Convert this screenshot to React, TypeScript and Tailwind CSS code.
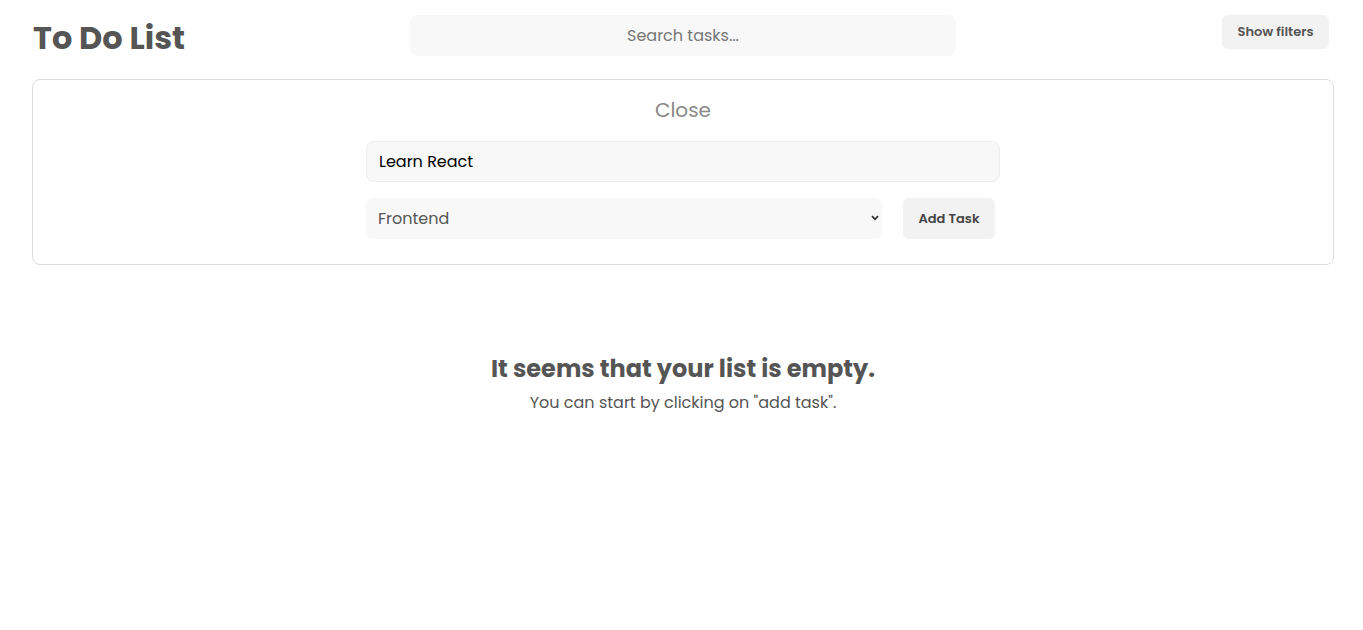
import { useState } from "react";

const font = { fontFamily: "Poppins, Inter, 'Open Sans', sans-serif" };

export default function App() {
    const [task, setTask] = useState("Learn React");
    const [category, setCategory] = useState("Frontend");

    return (
        <div className="min-h-screen bg-white text-[#555]" style={font}>
            {/* Header */}
            <div className="grid grid-cols-[1fr_546px_1fr] items-start pl-[33px] pr-[30px] pt-[15px]">
                <h1 className="text-[32px] font-bold leading-none mt-[7px] text-[#555]">To Do List</h1>
                <input
                    placeholder="Search tasks..."
                    className="h-[41px] rounded-lg bg-[#f8f8f8] text-center text-[16px] text-[#555] placeholder:text-[#777] outline-none"
                />
                <button className="justify-self-end mr-[4px] h-[34px] w-[107px] rounded-md bg-[#f2f2f2] text-[13px] font-semibold text-[#555]">
                    Show filters
                </button>
            </div>

            {/* Add task panel */}
            <div className="pl-8 pr-[29px] mt-[23px]">
                <div className="rounded-lg border border-[#ddd] pt-[16px] pb-[25px] flex flex-col items-center">
                    <button className="text-[20px] leading-[28px] text-[#888]">Close</button>
                    <div className="w-[634px] mt-[17px] flex flex-col gap-[16px]">
                        <input
                            value={task}
                            onChange={(e) => setTask(e.target.value)}
                            className="h-[41px] rounded-lg border border-[#eee] bg-[#f8f8f8] px-3 text-[16px] text-black outline-none"
                        />
                        <div className="flex items-center gap-[21px]">
                            <div className="relative w-[516px]">
                                <select
                                    value={category}
                                    onChange={(e) => setCategory(e.target.value)}
                                    className="appearance-none w-full h-[41px] rounded-lg bg-[#f8f8f8] px-3 text-[16px] text-[#555] outline-none"
                                >
                                    <option>Frontend</option>
                                    <option>Backend</option>
                                    <option>Design</option>
                                </select>
                                <svg
                                    className="pointer-events-none absolute right-[3px] top-[17px]"
                                    width="8"
                                    height="6"
                                    viewBox="0 0 8 6"
                                >
                                    <path d="M1 1.2 L4 4.3 L7 1.2" fill="none" stroke="#333" strokeWidth="1.8" />
                                </svg>
                            </div>
                            <button className="h-[41px] w-[92px] rounded-md bg-[#f2f2f2] text-[13px] font-semibold text-[#444]">
                                Add Task
                            </button>
                        </div>
                    </div>
                </div>
            </div>

            {/* Empty state */}
            <div className="flex flex-col items-center mt-[88px] pl-[3px]">
                <h2 className="text-[24px] font-bold leading-[32px] text-[#555]">It seems that your list is empty.</h2>
                <p className="text-[16px] leading-[24px] mt-[6px] text-[#555]">You can start by clicking on "add task".</p>
            </div>
        </div>
    );
}
